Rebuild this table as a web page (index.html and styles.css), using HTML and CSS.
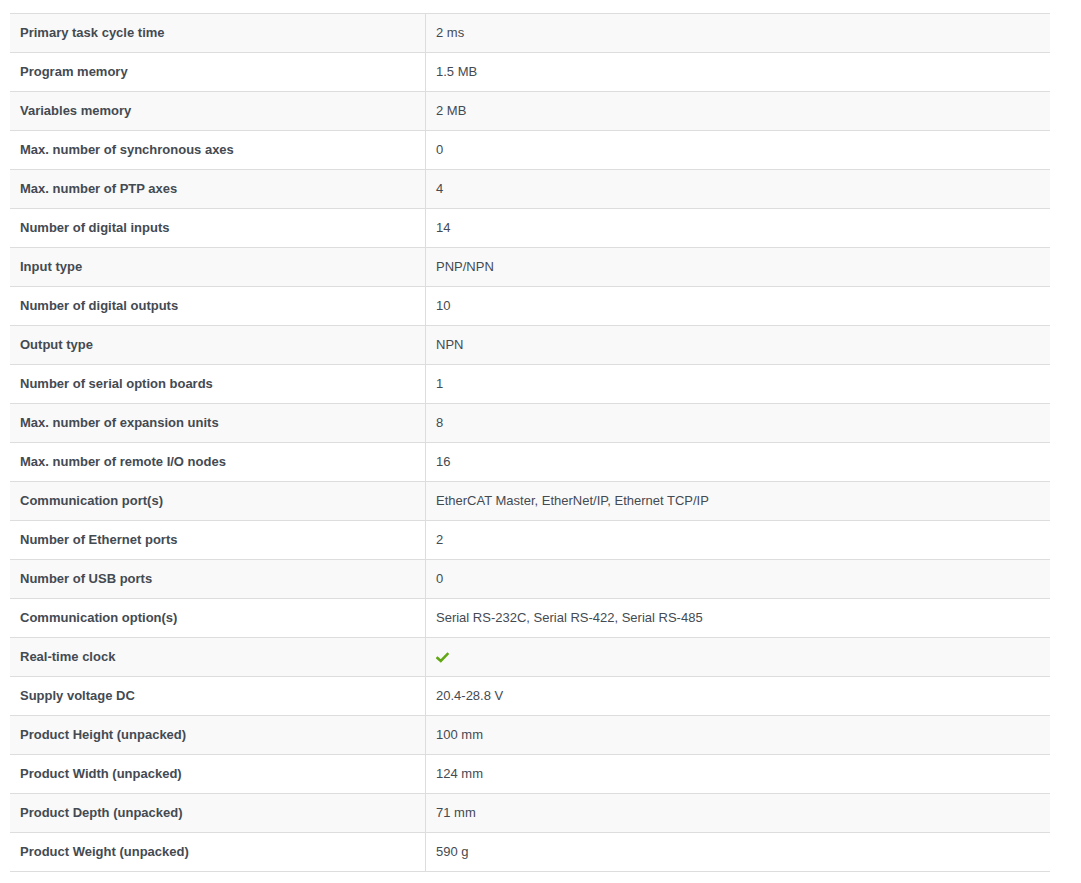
FILE: index.html
```html
<!DOCTYPE html>
<html>
<head>
<meta charset="utf-8">
<link rel="stylesheet" href="styles.css">
</head>
<body>
<div class="wrap">
<table class="specs">
<tbody>
<tr><th>Primary task cycle time</th><td>2 ms</td></tr>
<tr><th>Program memory</th><td>1.5 MB</td></tr>
<tr><th>Variables memory</th><td>2 MB</td></tr>
<tr><th>Max. number of synchronous axes</th><td>0</td></tr>
<tr><th>Max. number of PTP axes</th><td>4</td></tr>
<tr><th>Number of digital inputs</th><td>14</td></tr>
<tr><th>Input type</th><td>PNP/NPN</td></tr>
<tr><th>Number of digital outputs</th><td>10</td></tr>
<tr><th>Output type</th><td>NPN</td></tr>
<tr><th>Number of serial option boards</th><td>1</td></tr>
<tr><th>Max. number of expansion units</th><td>8</td></tr>
<tr><th>Max. number of remote I/O nodes</th><td>16</td></tr>
<tr><th>Communication port(s)</th><td>EtherCAT Master, EtherNet/IP, Ethernet TCP/IP</td></tr>
<tr><th>Number of Ethernet ports</th><td>2</td></tr>
<tr><th>Number of USB ports</th><td>0</td></tr>
<tr><th>Communication option(s)</th><td>Serial RS-232C, Serial RS-422, Serial RS-485</td></tr>
<tr><th>Real-time clock</th><td><svg class="check" width="13" height="11" viewBox="0 0 13 11"><path d="M1.5 6 L4.8 9 L11.5 2" fill="none" stroke="#62a815" stroke-width="2.6" stroke-linecap="square"/></svg></td></tr>
<tr><th>Supply voltage DC</th><td>20.4-28.8 V</td></tr>
<tr><th>Product Height (unpacked)</th><td>100 mm</td></tr>
<tr><th>Product Width (unpacked)</th><td>124 mm</td></tr>
<tr><th>Product Depth (unpacked)</th><td>71 mm</td></tr>
<tr><th>Product Weight (unpacked)</th><td>590 g</td></tr>
</tbody>
</table>
</div>
</body>
</html>
```
FILE: styles.css
```css
html, body {
  margin: 0;
  padding: 0;
  background: #fff;
}
.wrap {
  padding: 13px 0 0 10px;
}
.specs {
  width: 1040px;
  border-collapse: collapse;
  font-family: "Liberation Sans", Arial, sans-serif;
  font-size: 13px;
  color: #444a52;
}
.specs tr {
  height: 39px;
}
.specs tr:nth-child(odd) {
  background: #f9f9f9;
}
.specs th, .specs td {
  border-top: 1px solid #ddd;
  border-bottom: 1px solid #ddd;
  padding: 0 10px;
  text-align: left;
  vertical-align: middle;
  line-height: 18px;
}
.specs th {
  width: 395px;
  font-weight: bold;
  border-right: 1px solid #ddd;
}
.check {
  display: block;
}
```
